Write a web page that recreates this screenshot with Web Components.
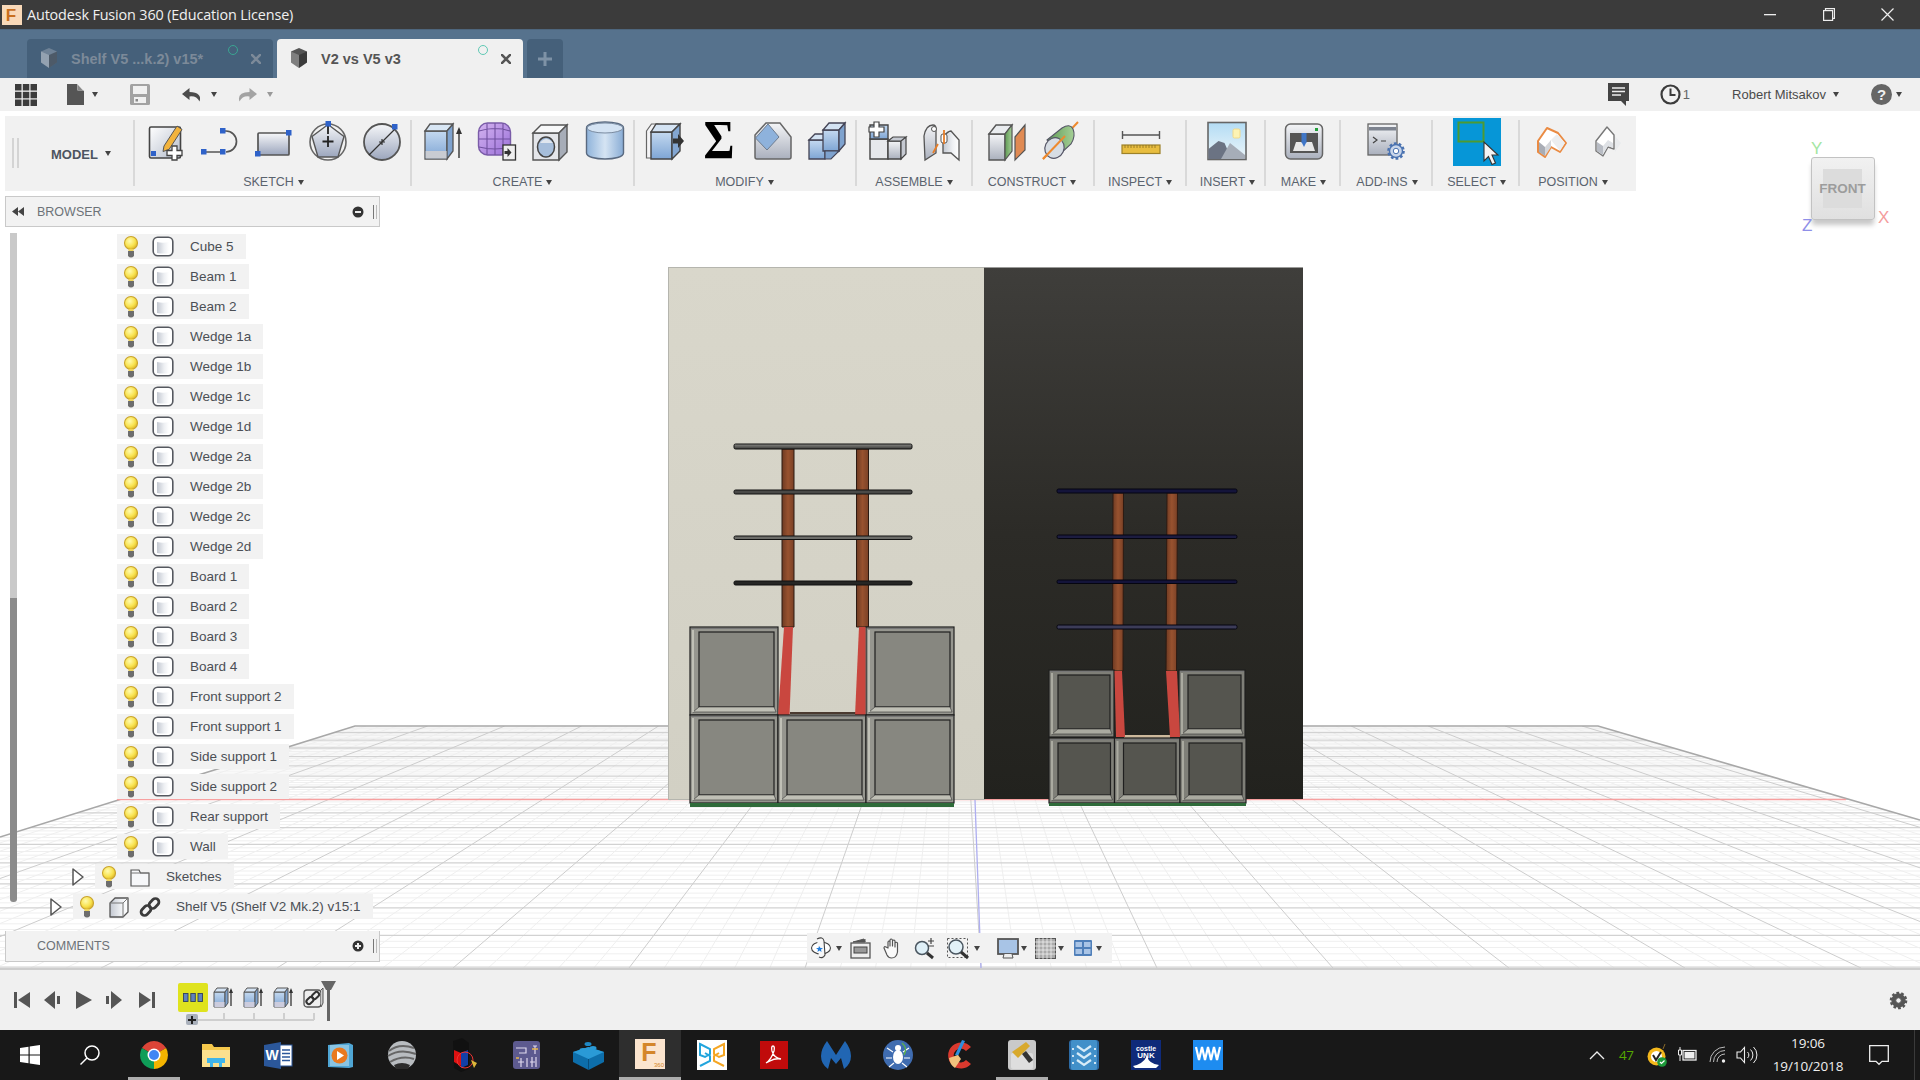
<!DOCTYPE html>
<html><head><meta charset="utf-8"><title>Fusion 360</title>
<style>
html,body{margin:0;padding:0;background:#fff}
body{width:1920px;height:1080px;overflow:hidden;display:flex;flex-direction:column;font-family:"Liberation Sans",Arial,sans-serif}
</style></head><body>
<win-titlebar></win-titlebar>
<doc-tabs>
  <doc-tab>Shelf V5 ...k.2) v15*</doc-tab>
  <doc-tab active>V2 vs V5 v3</doc-tab>
</doc-tabs>
<quick-bar></quick-bar>
<cad-viewport>
  <tool-bar>
    <model-group></model-group>
    <tool-group label="SKETCH"><ui-icon name="sk-new"></ui-icon><ui-icon name="sk-line"></ui-icon><ui-icon name="sk-rect"></ui-icon><ui-icon name="sk-poly"></ui-icon><ui-icon name="sk-circ"></ui-icon></tool-group>
    <tool-group label="CREATE" style="--lx:-2px"><ui-icon name="cr-extrude"></ui-icon><ui-icon name="cr-form"></ui-icon><ui-icon name="cr-hole"></ui-icon><ui-icon name="cr-cyl"></ui-icon></tool-group>
    <tool-group label="MODIFY" style="--lx:-3px"><ui-icon name="md-press"></ui-icon><ui-icon name="md-sigma"></ui-icon><ui-icon name="md-fillet"></ui-icon><ui-icon name="md-combine"></ui-icon></tool-group>
    <tool-group label="ASSEMBLE" style="--lx:-2px"><ui-icon name="as-new"></ui-icon><ui-icon name="as-joint"></ui-icon></tool-group>
    <tool-group label="CONSTRUCT" style="--lx:-4px"><ui-icon name="cn-plane"></ui-icon><ui-icon name="cn-axis"></ui-icon></tool-group>
    <tool-group label="INSPECT" style="--lx:-2px"><ui-icon name="in-measure"></ui-icon></tool-group>
    <tool-group label="INSERT" style="--lx:2px"><ui-icon name="ins-image"></ui-icon></tool-group>
    <tool-group label="MAKE"><ui-icon name="mk-print"></ui-icon></tool-group>
    <tool-group label="ADD-INS"><ui-icon name="ad-script"></ui-icon></tool-group>
    <tool-group label="SELECT"><ui-icon name="sel-window" style="margin:-3px 3px -5px"></ui-icon></tool-group>
    <tool-group label="POSITION" last style="--lx:-10px"><ui-icon name="pos-a"></ui-icon><ui-icon name="pos-b" style="margin:0 4px 0 10px"></ui-icon></tool-group>
  </tool-bar>
  <panel-head kind="browser">BROWSER</panel-head>
  <tree-panel>
    <tree-row icon="body">Cube 5</tree-row>
    <tree-row icon="body">Beam 1</tree-row>
    <tree-row icon="body">Beam 2</tree-row>
    <tree-row icon="body">Wedge 1a</tree-row>
    <tree-row icon="body">Wedge 1b</tree-row>
    <tree-row icon="body">Wedge 1c</tree-row>
    <tree-row icon="body">Wedge 1d</tree-row>
    <tree-row icon="body">Wedge 2a</tree-row>
    <tree-row icon="body">Wedge 2b</tree-row>
    <tree-row icon="body">Wedge 2c</tree-row>
    <tree-row icon="body">Wedge 2d</tree-row>
    <tree-row icon="body">Board 1</tree-row>
    <tree-row icon="body">Board 2</tree-row>
    <tree-row icon="body">Board 3</tree-row>
    <tree-row icon="body">Board 4</tree-row>
    <tree-row icon="body">Front support 2</tree-row>
    <tree-row icon="body">Front support 1</tree-row>
    <tree-row icon="body">Side support 1</tree-row>
    <tree-row icon="body">Side support 2</tree-row>
    <tree-row icon="body">Rear support</tree-row>
    <tree-row icon="body">Wall</tree-row>
    <tree-row icon="folder" level="folder">Sketches</tree-row>
    <tree-row icon="comp" level="comp" link>Shelf V5 (Shelf V2 Mk.2) v15:1</tree-row>
  </tree-panel>
  <panel-head kind="comments">COMMENTS</panel-head>
  <view-cube></view-cube>
  <nav-bar></nav-bar>
</cad-viewport>
<time-line></time-line>
<task-bar></task-bar>
<script>
const DEFS=`<defs>
<linearGradient id="gb" x1="0" y1="0" x2="0" y2="1"><stop offset="0" stop-color="#c4d9f0"/><stop offset="1" stop-color="#7ea5d4"/></linearGradient>
<linearGradient id="gbh" x1="0" y1="0" x2="1" y2="0"><stop offset="0" stop-color="#8fb3da"/><stop offset=".5" stop-color="#d5e4f3"/><stop offset="1" stop-color="#88acd5"/></linearGradient>
<linearGradient id="gg" x1="0" y1="0" x2="0" y2="1"><stop offset="0" stop-color="#f4f5f7"/><stop offset="1" stop-color="#aab0bd"/></linearGradient>
<linearGradient id="gh" x1="0" y1="0" x2="1" y2="0"><stop offset="0" stop-color="#c3c8d1"/><stop offset=".6" stop-color="#eef0f3"/><stop offset="1" stop-color="#fff"/></linearGradient>
<linearGradient id="gr" x1="0" y1="0" x2="0" y2="1"><stop offset="0" stop-color="#f6f7f9"/><stop offset="1" stop-color="#9ca6bd"/></linearGradient>
<linearGradient id="gs" x1="0" y1="0" x2="1" y2="1"><stop offset="0" stop-color="#fff"/><stop offset="1" stop-color="#b4bccb"/></linearGradient>
<linearGradient id="gp" x1="0" y1="0" x2="1" y2="1"><stop offset="0" stop-color="#d4b4f0"/><stop offset="1" stop-color="#9a6fd8"/></linearGradient>
<radialGradient id="gy" cx=".4" cy=".35" r=".7"><stop offset="0" stop-color="#fffbb0"/><stop offset=".6" stop-color="#f8e24e"/><stop offset="1" stop-color="#d8ad24"/></radialGradient>
<linearGradient id="gn" x1="0" y1="0" x2="1" y2="0"><stop offset="0" stop-color="#5f9a55"/><stop offset="1" stop-color="#a5cf96"/></linearGradient>
<linearGradient id="gsky" x1="0" y1="0" x2="0" y2="1"><stop offset="0" stop-color="#b3dcf4"/><stop offset="1" stop-color="#edf6fa"/></linearGradient>
</defs>`;
const sq=(x,y,s=5.5)=>`<rect x="${x}" y="${y}" width="${s}" height="${s}" fill="#2f62c9"/>`;
const gear=(x,y,r=6,c='#4a72b0')=>`<circle cx="${x}" cy="${y}" r="${r+.8}" fill="none" stroke="${c}" stroke-width="3" stroke-dasharray="2.6 2"/><circle cx="${x}" cy="${y}" r="${r}" fill="#c9d6ea" stroke="${c}" stroke-width="1.4"/><circle cx="${x}" cy="${y}" r="${r*.42}" fill="#fff" stroke="${c}"/>`;
const ICONS={
'sk-new':[40,40,`<rect x="3.5" y="6" width="31" height="31" rx="1.5" fill="url(#gs)" stroke="#444" stroke-width="1.6"/><path d="M18 25L31 5l5 3.5-13 20-6 2z" fill="#f2b33d" stroke="#555"/>${sq(5,30,5)}<path d="M26 25h5v4.5h5v5h-5v4.5h-5v-4.5h-5v-5h5z" fill="#fff" stroke="#444" stroke-width="1.3"/>`],
'sk-line':[40,40,`<path d="M5 31H25M24 10h2a10.500 10.500 0 0 1 0 21" fill="none" stroke="#555" stroke-width="1.7"/>${sq(1,28)}${sq(20,28)}${sq(20,7)}`],
'sk-rect':[40,40,`<rect x="4" y="12" width="31" height="22" rx="1" fill="url(#gr)" stroke="#555" stroke-width="1.7"/>${sq(32,9)}${sq(1,30)}`],
'sk-poly':[40,40,`<circle cx="20" cy="21" r="18" fill="none" stroke="#666" stroke-width="1.6"/><path d="M20 3.500L36 15.500 30 36H10L4 15.500z" fill="url(#gr)" stroke="#555" stroke-width="1.4"/><path d="M20 15v11M14.500 20.500h11M20 4v9" stroke="#222" stroke-width="1.8"/>${sq(17.5,0)}`],
'sk-circ':[40,40,`<circle cx="20" cy="21" r="18" fill="url(#gr)" stroke="#555" stroke-width="1.8"/><path d="M7 34L33 8M17 21h6M20 18v6" stroke="#333" stroke-width="1.2"/>${sq(30,3)}`],
'cr-extrude':[40,40,`<path d="M2 10h22v28H2z" fill="url(#gb)" stroke="#555" stroke-width="1.3"/><path d="M2 10l5-7h23l-6 7z" fill="#d8e6f4" stroke="#555" stroke-width="1.3"/><path d="M24 10l6-7v27l-6 8z" fill="#7fa3cf" stroke="#555" stroke-width="1.3"/><path d="M2.600 30h21v7.500h-21z" fill="#c9ccd2"/><path d="M36 37V8" stroke="#333" stroke-width="1.4"/><path d="M33 13l3-7 3 7z" fill="#333"/>`],
'cr-form':[40,40,`<rect x="1.500" y="2" width="32" height="32" rx="9" fill="url(#gp)" stroke="#7a5ca8" stroke-width="1.4"/><path d="M2 10q16-5 31 0M2 18h31M2 26q16 4 31 0M10 2.500v31M18 2v32M26 2.500v31" fill="none" stroke="#71519f" stroke-width="1.1"/><rect x="26" y="24" width="12.500" height="15" fill="#eee" stroke="#333" stroke-width="1.3"/><path d="M27.500 30h3v-3l4 4.500-4 4.500v-3h-3z" fill="#333"/>`],
'cr-hole':[40,40,`<path d="M2 12h26v27H2z" fill="#e4e6ea" stroke="#555" stroke-width="1.4"/><path d="M2 12l8-8h26l-8 8z" fill="#f7f8f9" stroke="#555" stroke-width="1.4"/><path d="M28 12l8-8v27l-8 8z" fill="#a7adb8" stroke="#555" stroke-width="1.4"/><ellipse cx="15" cy="26" rx="8.500" ry="10" fill="#a6bedb" stroke="#444" stroke-width="1.5"/><path d="M9 22q6-8 13 0" fill="#dfe6ee"/>`],
'cr-cyl':[40,40,`<path d="M1.500 7c0-8 37-8 37 0v25c0 8-37 8-37 0z" fill="url(#gbh)" stroke="#5a6a80" stroke-width="1.4"/><ellipse cx="20" cy="7" rx="18" ry="5" fill="#d4e3f3" stroke="#7a8ba0"/>`],
'md-press':[40,40,`<path d="M1.500 10l5-7h6l-4 7v27H1.500z" fill="#f4f4f6" stroke="#666" stroke-width="1.2"/><path d="M6 11h21v27H6z" fill="url(#gb)" stroke="#444" stroke-width="1.4"/><path d="M6 11l5-8h24l-8 8z" fill="#d4e3f3" stroke="#444" stroke-width="1.4"/><path d="M27 11l8-8v27l-8 8z" fill="#83a6d1" stroke="#444" stroke-width="1.4"/><path d="M28 17.500h5V13l6 7-6 7v-4.500h-5z" fill="#333"/>`],
'md-sigma':[40,40,`<text x="20" y="37" text-anchor="middle" font-family="Liberation Serif" font-weight="700" font-size="54" fill="#000" textLength="31" lengthAdjust="spacingAndGlyphs">Σ</text>`],
'md-fillet':[40,40,`<path d="M13 2h14l11 14v20q0 2-2 2H4q-2 0-2-2V14z" fill="url(#gg)" stroke="#666" stroke-width="1.5"/><path d="M2.500 17L15 3l11 13-12 13z" fill="#8eb2dc" stroke="#6d7c8f"/>`],
'md-combine':[40,40,`<path d="M2 19h16v19H2z" fill="url(#gb)" stroke="#445" stroke-width="1.3"/><path d="M2 19l6-6h14l-6 6z" fill="#d4e3f3" stroke="#445" stroke-width="1.3"/><path d="M16 9h16v21H16z" fill="url(#gb)" stroke="#445" stroke-width="1.3"/><path d="M16 9l6-7h16l-6 7z" fill="#d4e3f3" stroke="#445" stroke-width="1.3"/><path d="M32 9l6-7v21l-6 7z" fill="#7ea2ce" stroke="#445" stroke-width="1.3"/><path d="M18 30h14l-8 8h-6z" fill="#7ea2ce" stroke="#445" stroke-width="1.1"/>`],
'as-new':[40,40,`<path d="M2 18h18v20H2z" fill="#e6e8ec" stroke="#444" stroke-width="1.4"/><path d="M2 4h18v14H2z" fill="url(#gb)" stroke="#444" stroke-width="1.4"/><path d="M20 20h13v18H20z" fill="url(#gg)" stroke="#444" stroke-width="1.4"/><path d="M20 20l5-4h13l-5 4zM33 20l5-4v17l-5 5z" fill="#c5c9d1" stroke="#444" stroke-width="1.2"/><path d="M5 1h5v5h5v5h-5v5H5v-5H0V6h5z" fill="#fff" stroke="#444" stroke-width="1.2" transform="translate(1 0)"/>`],
'as-joint':[40,40,`<path d="M2 15q2-11 9-11 3 0 3 4v24l-11 7z" fill="url(#gg)" stroke="#555" stroke-width="1.3"/><path d="M21 16q5-6 8-6l8 9v20l-8-7h-8z" fill="url(#gh)" stroke="#555" stroke-width="1.3"/><rect x="19" y="13" width="6" height="9" rx="2" fill="#fff" stroke="#555"/><circle cx="12" cy="8" r="2.500" fill="#fff" stroke="#555"/><path d="M22 9v14M11 32l5-9" stroke="#e67e2a" stroke-width="1.8" fill="none"/>`],
'cn-plane':[40,40,`<path d="M2 13h16v26H2z" fill="url(#gg)" stroke="#555" stroke-width="1.4"/><path d="M2 13l7-9h16l-7 9z" fill="#e9ecef" stroke="#555" stroke-width="1.4"/><path d="M18 13l7-9v26l-7 9z" fill="url(#gn)" stroke="#555" stroke-width="1.2"/><path d="M28 16l10-12v25L28 39z" fill="#e08a52" stroke="#555" stroke-width="1.2"/>`],
'cn-axis':[40,40,`<path d="M2 38L37 1" stroke="#ee8a2f" stroke-width="2"/><path d="M6 19L21 7q8-5 11 1 3 7-2 15L16 36z" fill="url(#gn)" stroke="#556" stroke-width="1.100"/><ellipse cx="13.500" cy="27" rx="9.500" ry="10.500" fill="#d7dde4" stroke="#556" stroke-width="1.200" transform="rotate(25 13.500 27)"/><path d="M2 38L24 15" stroke="#ee8a2f" stroke-width="2"/>`],
'in-measure':[40,40,`<path d="M1.500 14h37M1.500 10v8M38.500 10v8" stroke="#555" stroke-width="1.4" fill="none"/><rect x="1" y="24" width="38" height="8.500" fill="#e8bd3f" stroke="#9d8128" stroke-width="1.2"/><path d="M4 24v3M7 24v3M10 24v3M13 24v3M16 24v3M19 24v3M22 24v3M25 24v3M28 24v3M31 24v3M34 24v3" stroke="#8a6f20" stroke-width=".8"/>`],
'ins-image':[40,40,`<rect x="1" y="1.500" width="38" height="37" fill="url(#gsky)" stroke="#666" stroke-width="1.6"/><rect x="26" y="8" width="7" height="9" rx="1.500" fill="#fdf3b4" stroke="#f1d98b"/><path d="M1.500 38V28l10-8 6 2 7 16z" fill="#6b7383"/><path d="M14 38l9-16 15 12v4z" fill="#a6adb8"/>`],
'mk-print':[40,40,`<rect x="1.500" y="3" width="37" height="35" rx="5" fill="url(#gg)" stroke="#666" stroke-width="1.5"/><rect x="6" y="12" width="28" height="20" fill="#555"/><path d="M9 30l3-9h16l3 9z" fill="#e8e8e8"/><rect x="17.500" y="12" width="5" height="10" fill="#3f76c7"/><path d="M18 22h4l-2 4z" fill="#3f76c7"/><rect x="31" y="7" width="3" height="3" fill="#23a03a"/>`],
'ad-script':[40,40,`<rect x="1" y="3" width="29" height="31" fill="url(#gg)" stroke="#666" stroke-width="1.3"/><rect x="2" y="6" width="27" height="3.500" fill="#7d838f"/><path d="M6 16l4 3-4 3M14 20h5" fill="none" stroke="#444" stroke-width="1.2"/>${gear(29,30,6.500)}`],
'sel-window':[48,48,`<rect width="48" height="48" fill="#0696d7"/><rect x="5.500" y="4.500" width="25" height="19" fill="none" stroke="#4d9a32" stroke-width="2"/><path d="M31 24v19l4.500-4.500 3.500 8 3.500-1.500-3.500-8h6z" fill="#f4f4f4" stroke="#333" stroke-width="1.1"/>`],
'pos-a':[40,40,`<path d="M16 7L27 12 35 22 29 31 20 26 14 36 7 31V20z" fill="#fff" stroke="#ea8b43" stroke-width="2" stroke-linejoin="round"/><path d="M8 21l6 5v9l-6-4z" fill="#a9adb5"/><path d="M14 26l6-7v7l-6 9z" fill="#d4d6da"/><path d="M20 19l9 11 5-8-8-9z" fill="#eceef0"/>`],
'pos-b':[40,40,`<path d="M26 14l7 8-6 9z" fill="#e9ebed"/><path d="M19 6L26 14V28L20 26 15 35 8 30V20z" fill="#fff" stroke="#777" stroke-width="1.400" stroke-linejoin="round"/><path d="M9 21l6 4v9l-6-4z" fill="#b8bcc4"/><path d="M15 25l5-6 5 3v5l-5-2-5 8z" fill="#dfe2e6"/>`],
bulb:[16,24,`<circle cx="8" cy="8" r="6.500" fill="url(#gy)" stroke="#c9a32c" stroke-width="1.100"/><path d="M5.500 14h5v3h-5z" fill="#efd45a"/><path d="M5 16h6v5q-3 3-6 0z" fill="#6d6d6d"/>`],
body:[22,21,`<rect x="1.200" y="1.200" width="19.600" height="18.600" rx="4.500" fill="#fff" stroke="#55585f" stroke-width="1.600"/><path d="M5 6q6 1.500 12 0v11q-6 1-12 0z" fill="url(#gh)"/>`],
folder:[20,20,`<path d="M1 3h8l1.500 3H19v13H1z" fill="#f6f7f9" stroke="#555" stroke-width="1.200"/><path d="M1 6h18" stroke="#777"/>`],
comp:[22,22,`<path d="M2 7l5-5h13v14l-5 5H2z" fill="url(#gh)" stroke="#555" stroke-width="1.300" stroke-linejoin="round"/><path d="M2 7h13l5-5M15 7v14" fill="none" stroke="#777"/>`],
link:[22,22,`<g fill="none" stroke="#3b3b3b" stroke-width="2.800"><rect x="1.500" y="11" width="11" height="7" rx="3.500" transform="rotate(-45 7 14.500)"/><rect x="9.500" y="4" width="11" height="7" rx="3.500" transform="rotate(-45 15 7.500)"/></g>`],
grid:[22,22,`<g fill="#3c3c3c"><rect width="6.500" height="6.500"/><rect x="7.800" width="6.500" height="6.500"/><rect x="15.500" width="6.500" height="6.500"/><rect y="7.800" width="6.500" height="6.500"/><rect x="7.800" y="7.800" width="6.500" height="6.500"/><rect x="15.500" y="7.800" width="6.500" height="6.500"/><rect y="15.500" width="6.500" height="6.500"/><rect x="7.800" y="15.500" width="6.500" height="6.500"/><rect x="15.500" y="15.500" width="6.500" height="6.500"/></g>`],
doc:[17,21,`<path d="M0 0h10l7 7v14H0z" fill="#555"/><path d="M10.500 0l6.500 6.500h-6.500z" fill="#f0f0f0"/><path d="M11 1l5 5.500h-5z" fill="#888"/>`],
save:[20,21,`<path d="M0 1.500Q0 0 1.500 0h17Q20 0 20 1.500v18q0 1.500-1.500 1.500h-17Q0 21 0 19.500z" fill="#a2a2a2"/><rect x="3" y="2" width="14" height="8" fill="#f0f0f0"/><rect x="4" y="13" width="12" height="6" fill="#f0f0f0"/><rect x="5.500" y="15" width="2.500" height="2.500" fill="#888"/>`],
undo:[20,14,`<path d="M7.500 0L0 6l7.500 6V8.500q7-1 10 5 3-9-10-9.500z" fill="#4c4c4c"/>`],
redo:[20,14,`<path d="M12.500 0L20 6l-7.500 6V8.500q-7-1-10 5-3-9 10-9.500z" fill="#a3a3a3"/>`],
chat:[21,23,`<path d="M0 0h21v18h-3v5l-5-5H0z" fill="#444"/><path d="M4 5h13M4 8.500h13M4 12h9" stroke="#eee" stroke-width="1.300"/>`],
clock:[21,21,`<circle cx="10.500" cy="10.500" r="9" fill="none" stroke="#3b3b3b" stroke-width="2.200"/><path d="M10.500 4.500v6.500h5" fill="none" stroke="#3b3b3b" stroke-width="2"/>`],
help:[21,21,`<circle cx="10.500" cy="10.500" r="10.500" fill="#666"/><text x="10.500" y="16" text-anchor="middle" font-family="Liberation Sans" font-weight="700" font-size="15" fill="#f0f0f0">?</text>`],
orbit:[22,22,`<ellipse cx="11" cy="11" rx="9.500" ry="6" fill="#fff" stroke="#444" stroke-width="1.100"/><path d="M7 2q6-3 7 2l1 14q-2 4-6 2" fill="#f7f7f7" stroke="#444" stroke-width="1.100"/><path d="M9 9l1.500 2L13 11l-2 1.500.5 2.500-2-1.500-2 1.500.5-2.500L6 11h2.500z" fill="#1f7bdc"/>`],
pan:[21,21,`<path d="M3 4l11-3 1 3zM15 1v3" fill="#555" stroke="#555"/><rect x="1" y="5" width="19" height="15" fill="#eee" stroke="#555" stroke-width="1.300"/><rect x="4" y="9" width="13" height="6" fill="#999" stroke="#444"/>`],
hand:[21,21,`<path d="M6 10V4q1-2 2 0v4-6q1-2 2.500 0v6-5q1.500-2 2.500 0v6-4q1.500-1.500 2.500 0v9q-1 6-6 6-3 0-4.500-3L2 10q0-2 2-1z" fill="#fafafa" stroke="#555" stroke-width="1.200" stroke-linejoin="round"/>`],
zoomp:[22,21,`<circle cx="8" cy="10" r="6.500" fill="#dff0f8" stroke="#4a5660" stroke-width="1.500"/><path d="M13 15l6 5" stroke="#333" stroke-width="3"/><path d="M14 3h6M17 0v6M14 8h6" stroke="#444" stroke-width="1.200"/>`],
zoomw:[22,21,`<rect x=".5" y=".5" width="20" height="19" fill="none" stroke="#555" stroke-dasharray="2 2"/><circle cx="9" cy="9" r="7" fill="#e2f1f8" stroke="#4a5660" stroke-width="1.500"/><path d="M14 14l7 6" stroke="#333" stroke-width="3"/>`],
display:[22,21,`<rect x="1" y="1" width="20" height="15" fill="#a8c4e6" stroke="#555" stroke-width="1.800"/><path d="M7 16l-1 4h10l-1-4" fill="#eee" stroke="#555"/>`],
vgrid:[21,21,`<rect x=".5" y=".5" width="20" height="20" fill="#aaa" stroke="#555"/><path d="M4 0v21M8 0v21M12 0v21M16 0v21M0 4h21M0 8h21M0 12h21M0 16h21" stroke="#f0f0f0" stroke-width=".8"/>`],
views:[20,18,`<rect x="1" y="1" width="18" height="16" rx="1" fill="#4f7fb9"/><g fill="#a9c4e6"><rect x="2.500" y="3" width="6.500" height="5"/><rect x="11" y="3" width="6.500" height="5"/><rect x="2.500" y="10" width="6.500" height="5"/><rect x="11" y="10" width="6.500" height="5"/></g>`],
tfirst:[16,18,`<path d="M0 1h3v16H0zM16 1v16L4 9z" fill="#555"/>`],
tprev:[16,18,`<path d="M11 0v18L0 9zM13 5h3v8h-3z" fill="#555"/>`],
tplay:[16,18,`<path d="M0 0l16 9L0 18z" fill="#555"/>`],
tnext:[16,18,`<path d="M5 0v18l11-9zM0 5h3v8H0z" fill="#555"/>`],
tlast:[16,18,`<path d="M0 1v16l12-8zM13 1h3v16h-3z" fill="#555"/>`],
tchip:[30,29,`<rect width="30" height="29" rx="2" fill="#dfe31e"/><g fill="#5f82bc" stroke="#30405c" stroke-width=".9"><rect x="5.500" y="10.500" width="4.500" height="8"/><rect x="12.800" y="10.500" width="4.500" height="8"/><rect x="20" y="10.500" width="4.500" height="8"/></g>`],
text:[20,22,`<path d="M1 6h11v15H1z" fill="url(#gb)" stroke="#555"/><path d="M1 6l3-4h11l-3 4z" fill="#d4e3f3" stroke="#555"/><path d="M12 6l3-4v15l-3 4z" fill="#7ea2ce" stroke="#555"/><path d="M1.500 16h10v5h-10z" fill="#ccd"/><path d="M18 20V4" stroke="#333" stroke-width="1.300"/><path d="M16 7l2-5 2 5z" fill="#333"/>`],
tlink:[21,21,`<rect x="1" y="3" width="17" height="17" rx="3" fill="#eee" stroke="#555" stroke-width="1.300"/><path d="M18 3l2-2v15l-2 4" fill="#ccc" stroke="#555"/><g fill="none" stroke="#333" stroke-width="2"><rect x="3" y="11" width="8" height="5" rx="2.500" transform="rotate(-45 7 13.500)"/><rect x="8.500" y="6" width="8" height="5" rx="2.500" transform="rotate(-45 12.500 8.500)"/></g>`],
tgear:[21,21,gear(10.5,10.5,6.5,'#555').replace(/#c9d6ea/g,'#555').replace(/#fff/g,'#f0f0f0')],
win:[20,20,`<path d="M0 3l8.500-1.200v7.700H0zM9.700 1.600L20 0v9.500H9.700zM0 10.500h8.500v7.700L0 17zM9.700 10.500H20V20L9.700 18.400z" fill="#fff"/>`],
search:[20,20,`<circle cx="12" cy="8" r="7" fill="none" stroke="#fff" stroke-width="1.500"/><path d="M7 13l-6.500 6.500" stroke="#fff" stroke-width="1.500"/>`],
chrome:[28,28,`<path d="M14 14L1.900 7A14 14 0 0 1 26.100 7z" fill="#db4437"/><path d="M14 14L26.100 7A14 14 0 0 1 14 28z" fill="#f4b400"/><path d="M14 14L14 28A14 14 0 0 1 1.900 7z" fill="#0f9d58"/><circle cx="14" cy="14" r="6.500" fill="#fff"/><circle cx="14" cy="14" r="5" fill="#4285f4"/>`],
explorer:[28,24,`<path d="M0 1h10l2 3h16v20H0z" fill="#f5c84c"/><path d="M0 7h28v17H0z" fill="#fbe08e"/><rect x="5" y="15" width="18" height="5" fill="#3fb4ea"/><rect x="8" y="20" width="3" height="4" fill="#3fb4ea"/><rect x="17" y="20" width="3" height="4" fill="#3fb4ea"/>`],
word:[28,27,`<path d="M0 3l17-3v27L0 24z" fill="#2b579a"/><rect x="16" y="3" width="12" height="21" fill="#fff" stroke="#2b579a"/><path d="M18 8h8M18 11.500h8M18 15h8M18 18.500h8" stroke="#2b579a" stroke-width="1.500"/><text x="8" y="18" text-anchor="middle" font-family="Liberation Sans" font-weight="700" font-size="14" fill="#fff">W</text>`],
media:[25,25,`<path d="M0 2l21-2 4 2v22l-4 1-21-1z" fill="#4fa6d5"/><rect x="2" y="2" width="19" height="21" fill="#8ac4e2"/><circle cx="11.500" cy="12.500" r="8" fill="#e9791f"/><path d="M9 8l7 4.500-7 4.500z" fill="#fff"/>`],
earth:[28,28,`<circle cx="14" cy="14" r="14" fill="#b8bcc0"/><path d="M1 10q10-8 25-3M0 15q12-8 28-2M2 21q12-7 24-3" fill="none" stroke="#666" stroke-width="2"/><path d="M6 24q8-4 16 0l-2 4H8z" fill="#2c2c2c"/>`],
cad:[30,34,`<path d="M4 3l9-3 7 5v26l-8 3-7-4z" fill="#111"/><path d="M5 12l7 3v13l-7-4z" fill="#d11"/><path d="M12 15l7-3v15l-7 3z" fill="#123fa8"/><circle cx="16" cy="22" r="8" fill="none" stroke="#e33"/><path d="M22 22l6 3-3 5z" fill="#dcb73a"/>`],
circuit:[27,28,`<rect width="27" height="28" rx="3" fill="#5d5a8f"/><path d="M3 7h10v5H6M22 5v8M24 5h-4M8 17v9M5 21h6M14 17v9M19 16v10M23 16v10M17 21h5" stroke="#dfd9ee" stroke-width="1.200" fill="none"/><path d="M19 8h6M3 17h3" stroke="#e8b64c" stroke-width="1.500"/>`],
brick:[31,29,`<path d="M15.500 6L31 11v10L15.500 29 0 21V11z" fill="#0d6eaa"/><path d="M0 11l15.500-5L31 11l-15.500 7z" fill="#2a9ad6"/><ellipse cx="10" cy="9" rx="3.500" ry="2" fill="#2a9ad6"/><ellipse cx="20" cy="7" rx="3.500" ry="2" fill="#2a9ad6"/><ellipse cx="15" cy="3" rx="3.500" ry="2" fill="#1e88c4"/><path d="M15.500 18v11" stroke="#094f7c"/>`],
fus:[30,30,`<rect width="30" height="30" fill="#fbe5cf"/><text x="14" y="22" text-anchor="middle" font-family="Liberation Sans" font-weight="700" font-size="25" fill="#d4862a">F</text><text x="24" y="28" text-anchor="middle" font-family="Liberation Sans" font-size="6" fill="#d4862a">360</text>`],
xm:[30,30,`<rect width="30" height="30" fill="#fff"/><path d="M3 4l10 5v5l-5 3-5-2zM3 26l10-5v-5l-5-3" fill="none" stroke="#22a5dd" stroke-width="2"/><path d="M27 4l-10 5v5l5 3 5-2zM27 26l-10-5v-5l5-3" fill="none" stroke="#f5a623" stroke-width="2"/>`],
pdf:[28,28,`<rect width="28" height="28" fill="#c00b0b"/><path d="M6 22q5-3 8-12 1-5-1-5t-1 5q2 7 9 8-6-1-11 2z" fill="none" stroke="#fff" stroke-width="1.300"/>`],
mb:[30,28,`<path d="M15 14L6 0Q0 8 0 15q0 8 7 13l3-11 5 6 5-6 3 11q7-5 7-13 0-7-6-15z" fill="#2166b3"/>`],
spy:[30,30,`<circle cx="15" cy="15" r="15" fill="#3f6cb0"/><ellipse cx="15" cy="17" rx="5" ry="7" fill="#fff"/><circle cx="15" cy="8" r="3" fill="#fff"/><path d="M10 12L4 8M20 12l6-4M9 18H3M21 18h6M11 23l-5 4M19 23l5 4" stroke="#fff" stroke-width="1.200"/><path d="M19 3q6 5 2 12" stroke="#5bb04c" fill="none" stroke-width="1.400"/>`],
cc:[30,30,`<path d="M26 7A13 13 0 1 0 26 24l-5-4A7 7 0 1 1 21 11z" fill="#d9392e"/><path d="M17 0l3 1-7 15-3-1z" fill="#2f8edb"/><path d="M4 18l9-3 3 4-6 9q-5-3-6-10z" fill="#f2c27d"/>`],
disk:[28,30,`<rect width="28" height="30" rx="3" fill="#c9c9c9"/><rect x="3" y="13" width="22" height="16" rx="2" fill="#dedede"/><path d="M4 12L18 2l4 4-12 12z" fill="#d8a92c"/><path d="M14 14l4-3 7 9-4 3z" fill="#333"/>`],
pak:[30,30,`<rect width="30" height="30" rx="3" fill="#2c6ba5"/><rect x="2" y="0" width="26" height="30" rx="2" fill="#4290c9"/><path d="M8 6l7 5 7-5M8 13l7 5 7-5M8 20l7 5 7-5" fill="none" stroke="#d8ecf8" stroke-width="2.200"/><path d="M4 8v2M4 15v2M4 22v2M26 8v2M26 15v2M26 22v2" stroke="#cfe4f2" stroke-width="2"/>`],
cu:[30,30,`<rect width="30" height="30" fill="#0f2a7a"/><path d="M2 26q10-2 14-10 2 8 12 9l-3 3H4z" fill="#fff"/><text x="15" y="11" text-anchor="middle" font-family="Liberation Sans" font-weight="700" font-size="8" fill="#fff" textLength="20" lengthAdjust="spacingAndGlyphs">costle</text><text x="15" y="18" text-anchor="middle" font-family="Liberation Sans" font-weight="700" font-size="8" fill="#fff">UNK</text>`],
wave:[30,30,`<rect width="30" height="30" fill="#1e8cf0"/><path d="M3 7l3 13 3-13 3 13 3-13 3 13 3-13 3 13 3-13" fill="none" stroke="#fff" stroke-width="2.200"/>`],
fapp:[20,20,`<rect width="20" height="20" fill="#f9d9b8"/><text x="9" y="16" text-anchor="middle" font-family="Liberation Sans" font-weight="700" font-size="17" fill="#c96f1e">F</text>`],
cube3d:[20,20,`<path d="M2 3.500L10 0l8 3.500v11L10 20l-8-5.500z" fill="currentColor"/><path d="M10 7v13L2 14.500v-11z" fill="#fff" opacity=".25"/><path d="M10 7v13l8-5.500v-11z" fill="#000" opacity=".3"/>`],
caret:[16,9,`<path d="M1 8l7-7 7 7" fill="none" stroke="#eee" stroke-width="1.300"/>`],
norton:[20,23,`<circle cx="9.500" cy="12.500" r="9" fill="#f4b81c"/><circle cx="9.500" cy="12.500" r="5.500" fill="#fff"/><path d="M6 11l3 5 5-8" fill="none" stroke="#222" stroke-width="2"/><circle cx="15" cy="18" r="4.800" fill="#1d9a3a"/><path d="M13 18l1.500 1.500 3-3" fill="none" stroke="#fff" stroke-width="1.200"/><path d="M16 5l2-5" stroke="#8a6a2a"/>`],
batt:[20,16,`<rect x="6" y="3.500" width="13" height="9.500" fill="none" stroke="#eee" stroke-width="1.300"/><rect x="7.500" y="5" width="10" height="6.500" fill="#eee"/><path d="M3 0v3M1.500 3h3v5h-3zM3 8v6" stroke="#eee" fill="none"/>`],
wifi:[16,16,`<path d="M0 15a15 15 0 0 1 15-15M3.500 15a11.500 11.500 0 0 1 11.500-11.500M7 15a8 8 0 0 1 8-8" fill="none" stroke="#bbb" stroke-width="1"/><circle cx="13.500" cy="14" r="1.700" fill="#eee"/>`],
vol:[20,18,`<path d="M0 6h3.500l4-4.500v15l-4-4.500H0z" fill="none" stroke="#eee" stroke-width="1.100"/><path d="M10.500 6a4 4 0 0 1 0 6M13.500 3.500a7.500 7.500 0 0 1 0 11M16.500 1a11 11 0 0 1 0 16" fill="none" stroke="#eee" stroke-width="1"/>`],
notif:[20,20,`<path d="M.7.700h18.600v15.600h-6.300l-3 3-3-3H.7z" fill="none" stroke="#eee" stroke-width="1.300"/>`]
};
class UiIcon extends HTMLElement{
  constructor(){super();this.attachShadow({mode:'open'})}
  connectedCallback(){
    const e=ICONS[this.getAttribute('name')];if(!e)return;
    const [w,h,b]=e;
    this.shadowRoot.innerHTML=`<style>:host{display:inline-block;width:${w}px;height:${h}px;flex:none;line-height:0}svg{display:block;overflow:visible}</style><svg width="${w}" height="${h}" viewBox="0 0 ${w} ${h}" xmlns="http://www.w3.org/2000/svg">${DEFS}${b}</svg>`;
  }
}
customElements.define('ui-icon',UiIcon);
function def(tag,html){
  class C extends HTMLElement{constructor(){super();this.attachShadow({mode:'open'}).innerHTML=html;}}
  customElements.define(tag,C);
}
const CARET=(c='#444')=>`<span style="display:inline-block;width:0;height:0;border-left:3.5px solid transparent;border-right:3.5px solid transparent;border-top:5px solid ${c}"></span>`;
def('win-titlebar',`<style>
:host{display:flex;flex:none;height:29px;background:#3b3b3b;align-items:center;color:#f0f0f0;font:14.400px "Open Sans",sans-serif}
.t{margin-left:5px;letter-spacing:-.15px}
ui-icon{margin-left:2px}
.c{margin-left:auto;display:flex;align-items:center}
.b{width:59px;height:29px;display:flex;align-items:center;justify-content:center}
</style><ui-icon name="fapp"></ui-icon><span class="t">Autodesk Fusion 360 (Education License)</span>
<div class="c"><div class="b"><svg width="12" height="2"><rect width="12" height="1.300" fill="#eee"/></svg></div>
<div class="b"><svg width="12" height="13" fill="none" stroke="#eee" stroke-width="1.200"><rect x=".6" y="2.600" width="9" height="9.800"/><path d="M2.500 2.500V.6h9v9.800H9.700"/></svg></div>
<div class="b" style="margin-right:3px"><svg width="13" height="13" stroke="#eee" stroke-width="1.200"><path d="M.5.500l12 12M12.500.500l-12 12"/></svg></div></div>`);
def('doc-tabs',`<style>
:host{display:flex;flex:none;height:49px;box-sizing:border-box;background:#56728d;border-top:1px solid #4e667d;padding:9px 0 0 27px;gap:4px}
.p{width:36px;height:39px;background:#45607a;border-radius:4px 4px 0 0;display:flex;align-items:center;justify-content:center}
</style><slot></slot><div class="p"><svg width="14" height="14" fill="#7e92a6"><path d="M5.500 0h3v5.500H14v3H8.500V14h-3V8.500H0v-3h5.500z"/></svg></div>`);
def('doc-tab',`<style>
:host{display:flex;width:246px;height:39px;box-sizing:border-box;padding:0 12px;align-items:center;background:#45607a;color:#7c8a99;border-radius:4px 4px 0 0;font:700 14.500px "Liberation Sans",sans-serif}
:host([active]){background:#f0f0f0;color:#555}
ui-icon{color:#6f8296;margin-bottom:2px}
:host([active]) ui-icon{color:#555}
.t{flex:1;margin-left:12px;white-space:nowrap}
.o{width:10px;height:10px;box-sizing:border-box;border:1.500px solid #3aa592;border-radius:50%;margin-bottom:18px}
:host([active]) .o{border-color:#5fc9b4}
.x{margin-left:13px}
</style><ui-icon name="cube3d"></ui-icon><span class="t"><slot></slot></span><span class="o"></span><svg class="x" width="10" height="10" stroke-width="2.600"><path d="M0 0l10 10M10 0L0 10" stroke="currentColor"/></svg>`);
def('quick-bar',`<style>
:host{display:flex;flex:none;height:33px;background:#f0f0f0;align-items:center;box-sizing:border-box;font:13px "Liberation Sans",sans-serif;color:#4a4a4a}
span.n{white-space:nowrap}
.r{margin-left:auto;display:flex;align-items:center;padding-right:18px}
</style>
<ui-icon name="grid" style="margin-left:15px"></ui-icon>
<ui-icon name="doc" style="margin-left:30px"></ui-icon><span style="margin-left:8px;display:flex">${CARET()}</span>
<ui-icon name="save" style="margin-left:32px"></ui-icon>
<ui-icon name="undo" style="margin-left:32px"></ui-icon><span style="margin-left:9px;display:flex">${CARET()}</span>
<ui-icon name="redo" style="margin-left:20px"></ui-icon><span style="margin-left:10px;display:flex">${CARET('#999')}</span>
<div class="r"><ui-icon name="chat"></ui-icon><ui-icon name="clock" style="margin-left:31px"></ui-icon><span style="margin-left:2px;color:#666">1</span><span class="n" style="margin-left:42px">Robert Mitsakov</span><span style="margin-left:7px;display:flex">${CARET()}</span><ui-icon name="help" style="margin-left:32px"></ui-icon><span style="margin-left:4px;display:flex">${CARET()}</span></div>`);
def('tool-bar',`<style>
:host{display:grid;flex:none;width:1631px;height:75px;box-sizing:border-box;padding-top:4px;background:#f1f1f1;grid-template-columns:130px 277px 223px 222px 116px 122px 92px 79px 75px 92px 87px 116px}
</style><slot></slot>`);
def('model-group',`<style>
:host{display:flex;height:71px;align-items:flex-start;background:linear-gradient(#d9d9d9,#d9d9d9) right top/2px 66px no-repeat;font:700 13px "Liberation Sans",sans-serif;color:#4d5560}
.g{width:7px;height:30px;margin:18px 0 0 7px;box-sizing:border-box;border-left:2px solid #d4d4d4;border-right:2px solid #d4d4d4}
.m{margin:27px 0 0 32px}
.a{margin:31px 0 0 7px;display:flex}
</style><div class="g"></div><span class="m">MODEL</span><span class="a">${CARET()}</span>`);
class ToolGroup extends HTMLElement{
  constructor(){super();this.attachShadow({mode:'open'}).innerHTML=`<style>
:host{display:flex;flex-direction:column;align-items:center;height:71px;background:linear-gradient(#d9d9d9,#d9d9d9) right top/2px 66px no-repeat}
:host([last]){background:none}
.i{display:flex;height:40px;margin-top:1px}
::slotted(ui-icon){margin:0 7px}
.l{margin-top:14px;margin-left:var(--lx,0);height:14px;font:12.500px/14px "Liberation Sans",sans-serif;color:#5a636e;display:flex;align-items:center;gap:4px;white-space:nowrap}
</style><div class="i"><slot></slot></div><div class="l"><span id="t"></span>${CARET()}</div>`;}
  connectedCallback(){this.shadowRoot.getElementById('t').textContent=this.getAttribute('label')}
}
customElements.define('tool-group',ToolGroup);
class PanelHead extends HTMLElement{
  constructor(){super();this.attachShadow({mode:'open'})}
  connectedCallback(){
    const c=this.getAttribute('kind')==='comments';
    this.shadowRoot.innerHTML=`<style>
:host{display:flex;flex:none;align-items:center;width:375px;height:31px;box-sizing:border-box;background:#f2f2f2;border:1px solid #c9c9c9;font:12.500px "Liberation Sans",sans-serif;color:#6d7278;margin-top:5px}
:host([kind=comments]){border-top:none;margin-top:auto;margin-bottom:6px}
.d{width:12px;margin-left:6px;display:flex}
.t{margin-left:13px;flex:1}
.h{width:2px;height:14px;border-left:1px solid #777;border-right:1px solid #bbb;margin:0 2px 0 9px}
svg{display:block}
</style><span class="d">${c?'':'<svg width="12" height="9"><path d="M6 0v9L0 4.500zM12 0v9L6 4.500z" fill="#444"/></svg>'}</span><span class="t"><slot></slot></span><svg width="12" height="12"><circle cx="6" cy="6" r="5.500" fill="#333"/><rect x="3" y="5" width="6" height="2" fill="#eee"/>${c?'<rect x="5" y="3" width="2" height="6" fill="#eee"/>':''}</svg><span class="h"></span>`;
  }
}
customElements.define('panel-head',PanelHead);
def('tree-panel',`<style>
:host{display:flex;flex:none;margin-top:7px;align-items:flex-start}
.s{width:7px;height:669px;margin:-1px 0 0 5px;border-radius:0 0 3px 3px;background:linear-gradient(#c9c9c9 365px,#8b8b8b 365px);flex:none}
.l{display:flex;flex-direction:column;gap:5px}
</style><div class="s"></div><div class="l"><slot></slot></div>`);
class TreeRow extends HTMLElement{
  constructor(){super();this.attachShadow({mode:'open'})}
  connectedCallback(){
    const lv=this.getAttribute('level'),ic=this.getAttribute('icon'),link=this.hasAttribute('link');
    this.shadowRoot.innerHTML=`<style>
:host{display:flex;height:25px;align-items:center;margin-left:100px;font:13.500px "Liberation Sans",sans-serif;color:#4b4f55}
:host([level=folder]){margin-left:55px}
:host([level=comp]){margin-left:33px}
.e{margin-right:11px;display:flex}
.p{display:flex;align-items:center;height:25px;background:#f2f2f2;padding:0 12px 0 6px;white-space:nowrap}
.b{margin-left:13px}
.t{margin-left:16px}
.k{margin-left:9px}
:host([level=comp]) .t{margin-left:15px}
</style>${lv?`<span class="e"><svg width="12" height="18"><path d="M1 1l10 8-10 8z" fill="#fff" stroke="#555" stroke-width="1.500" stroke-linejoin="round"/></svg></span>`:''}
<div class="p"><ui-icon name="bulb"></ui-icon><ui-icon class="b" name="${ic}"></ui-icon>${link?'<ui-icon class="k" name="link"></ui-icon>':''}<span class="t"><slot></slot></span></div>`;
  }
}
customElements.define('tree-row',TreeRow);
def('view-cube',`<style>
:host{position:absolute;left:1800px;top:28px;width:95px;height:95px;font:700 13.500px "Liberation Sans",sans-serif}
.c{position:absolute;left:11px;top:18px;width:64px;height:63px;box-sizing:border-box;border:1.500px solid #c2c2c2;border-radius:3px;background:linear-gradient(#f1f1f1,#e0e0e0);box-shadow:0 6px 5px -1px #c8c8c8}
.f{position:absolute;left:11px;top:11px;width:39px;height:39px;background:#dcdcdc;display:flex;align-items:center;justify-content:center;color:#9c9c9c}
.a{position:absolute;font-weight:400;font-size:17px;line-height:17px}
</style><span class="a" style="left:11px;top:1px;color:#a3e6a3">Y</span><div class="c"><div class="f">FRONT</div></div><span class="a" style="left:78px;top:70px;color:#f49c9c">X</span><span class="a" style="left:2px;top:78px;color:#8f8fe8">Z</span>`);
def('nav-bar',`<style>
:host{position:absolute;left:807px;bottom:5px;width:305px;height:30px;background:#f2f2f2;display:flex;align-items:center;box-sizing:border-box;padding-left:3px}
ui-icon{display:block}
span{display:flex}
</style><ui-icon name="orbit"></ui-icon><span style="margin-left:4px">${CARET()}</span>
<ui-icon name="pan" style="margin-left:8px"></ui-icon><ui-icon name="hand" style="margin-left:11px"></ui-icon><ui-icon name="zoomp" style="margin-left:11px"></ui-icon><ui-icon name="zoomw" style="margin-left:11px"></ui-icon><span style="margin-left:5px">${CARET()}</span>
<ui-icon name="display" style="margin-left:17px"></ui-icon><span style="margin-left:2px">${CARET()}</span>
<ui-icon name="vgrid" style="margin-left:8px"></ui-icon><span style="margin-left:2px">${CARET()}</span>
<ui-icon name="views" style="margin-left:9px"></ui-icon><span style="margin-left:3px">${CARET()}</span>`);
class CadViewport extends HTMLElement{
  constructor(){super();this.attachShadow({mode:'open'});
    this.shadowRoot.innerHTML=`<style>
:host{display:flex;flex-direction:column;flex:none;height:857px;box-sizing:border-box;padding:5px 0 0 5px;position:relative;isolation:isolate;background:#fff;overflow:hidden}
svg{position:absolute;left:0;top:0;z-index:-1}
</style><svg width="1920" height="857" viewBox="0 111 1920 857" xmlns="http://www.w3.org/2000/svg">${scene()}</svg><slot></slot>`;}
}
function scene(){
  const VP=[955,538];let minor='',major='';
  for(let i=-60;i<=60;i++){
    const xb=981+176*i/5,xt=VP[0]+(xb-VP[0])*188/430;
    const l=`<path d="M${xt.toFixed(1)} 726L${xb.toFixed(1)} 968"/>`;
    if(i%5===0)major+=l;else minor+=l;
  }
  let hmin='',hmaj='';
  for(let n=0;n<=16;n++){
    for(let m=0;m<5;m++){
      const y=(538+1/(.00233+.000187*(n+m/5))).toFixed(1);
      if(y<726)continue;
      const l=`<path d="M0 ${y}H1920"/>`;
      if(m===0)hmaj+=l;else hmin+=l;
    }
  }
  const wood=(x1,y1,x2,y2,w)=>`<path d="M${x1} ${y1}h${w}L${x2+w} ${y2}h-${w}z" fill="url(#wd)" stroke="#2c1a12" stroke-width="1"/>`;
  const shelf=(x,y,w,h,c,e='#111')=>`<rect x="${x}" y="${y}" width="${w}" height="${h}" rx="1.500" fill="${c}" stroke="${e}" stroke-width="1"/>`;
  const wedge=(a,b,c,d,y1,y2)=>`<path d="M${a} ${y1}H${b}L${d} ${y2}H${c}z" fill="#c9473f"/>`;
  const box=(x,y,w,h,f,p,lip)=>`<rect x="${x}" y="${y}" width="${w}" height="${h}" fill="${f}" stroke="#1e1e1e" stroke-width="1.200"/>
  <rect x="${x+9}" y="${y+5}" width="${w-13}" height="${h-13}" fill="${p}" stroke="#1f1f1f" stroke-width="1.200"/>
  <path d="M${x+3} ${y+h-3}L${x+9} ${y+h-8}H${x+w-4}L${x+w-2} ${y+h-3}z" fill="${lip}" stroke="#333" stroke-width=".6"/>
  <path d="M${x+3} ${y+3}V${y+h-3}" stroke="${lip}" stroke-width="2"/><path d="M${x+1} ${y+1.500}H${x+w-1}" stroke="#777" stroke-width="1"/>`;
  const LF='#96968f',LP='#878780',LL='#c0c0b6',DF='#7f7f78',DP='#55554f',DL='#aaaaa0';
  return `<defs>
  <clipPath id="floor"><path d="M355 726H1598L1920 820V968H0V837z"/></clipPath>
  <linearGradient id="wl" x1="0" y1="0" x2="0" y2="1"><stop offset="0" stop-color="#d9d7cb"/><stop offset="1" stop-color="#d2d0c4"/></linearGradient>
  <linearGradient id="wr" x1="0" y1="0" x2="0" y2="1"><stop offset="0" stop-color="#3f3e3b"/><stop offset=".5" stop-color="#2c2b27"/><stop offset="1" stop-color="#22221e"/></linearGradient>
  <linearGradient id="wd" x1="0" y1="0" x2="1" y2="0"><stop offset="0" stop-color="#6d3a22"/><stop offset=".5" stop-color="#98522f"/><stop offset="1" stop-color="#7a4126"/></linearGradient>
  <linearGradient id="sh" x1="0" y1="0" x2="0" y2="1"><stop offset="0" stop-color="#8a8a86"/><stop offset="1" stop-color="#3a3a38"/></linearGradient>
  </defs>
  <g clip-path="url(#floor)"><g stroke="#efefef" stroke-width="1" fill="none">${hmin}${minor}</g><g stroke="#d2d2d2" stroke-width="1.300" fill="none">${hmaj}</g><g stroke="#cdcdcd" stroke-width="1" fill="none">${major}</g></g>
  <path d="M0 837L355 726H1598L1920 820" fill="none" stroke="#a8a8a8" stroke-width="1.600"/>
  <path d="M117 799.500H1846" stroke="#f7a0a0" stroke-width="1.300"/>
  <path d="M975 800L981 968" stroke="#aeaef0" stroke-width="1.300"/>
  <rect x="668.500" y="267.500" width="316" height="532" fill="url(#wl)" stroke="#b5b5ae" stroke-width="1"/>
  <rect x="984" y="267" width="319" height="532" fill="url(#wr)"/><path d="M984 267.500H1303" stroke="#9a9a98"/>
  ${wood(782,449,782,627,12)}${wood(856.5,449,856.5,627,12)}
  ${shelf(734,444,178,5,'url(#sh)')}${shelf(734,490,178,4,'#4a4a48')}${shelf(734,536,178,3.500,'#6c6c68')}${shelf(734,581,178,4,'#262624')}
  <rect x="790" y="716" width="66" height="2" fill="#c9b89a"/><rect x="790" y="712" width="66" height="2" fill="#4a3a30"/>
  ${box(690,627,88,88,LF,LP,LL)}${box(866,627,88,88,LF,LP,LL)}
  ${wedge(784,793,778,789.5,627,716)}${wedge(859,865.5,855,865.5,627,716)}
  ${box(690,715,88,88,LF,LP,LL)}${box(778,715,88,88,LF,LP,LL)}${box(866,715,88,88,LF,LP,LL)}
  <rect x="690" y="803" width="264" height="4" fill="#2f6b3a"/>
  ${wood(1113,493,1112.500,671,10.500)}${wood(1167,493,1166,671,10.500)}
  ${shelf(1057,489,180,4,'#14143a','#050510')}${shelf(1057,535,180,3.500,'#1c1c40','#050510')}${shelf(1057,580,180,3.500,'#14143a','#050510')}${shelf(1057,625,180,4,'#3c3c58','#050510')}
  <rect x="1124" y="735" width="46" height="3" fill="#cdb99c"/>
  ${box(1049,670,65,67,DF,DP,DL)}${box(1179,670,66,67,DF,DP,DL)}
  ${wedge(1114.5,1122,1116,1125,671,737)}${wedge(1166,1177,1170,1180,671,737)}
  ${box(1049,738,65.500,65,DF,DP,DL)}${box(1114.500,738,65.500,65,DF,DP,DL)}${box(1180,738,66,65,DF,DP,DL)}
  <rect x="1049" y="803" width="197" height="3" fill="#2f6b3a"/>`;
}
customElements.define('cad-viewport',CadViewport);
def('time-line',`<style>
:host{display:flex;flex:none;height:62px;box-sizing:border-box;background:#f0f0f0;border-top:2px solid #cdcdcd;align-items:center;padding-left:14px}
.tr{position:relative;display:flex;align-items:center;margin-left:23px;height:60px;width:160px;padding-bottom:6px;box-sizing:border-box}
.rail{position:absolute;left:13px;top:49px;width:123px;height:2px;background:#cfcfcf}
.tick{position:absolute;top:43px;width:2px;height:7px;background:#cfcfcf}
.add{position:absolute;left:8px;top:44px;width:12px;height:11px;background:#a9b0bb;border-radius:2px;display:flex;align-items:center;justify-content:center}
.mk{position:absolute;left:143px;top:11px}
</style>
<ui-icon name="tfirst"></ui-icon><ui-icon name="tprev" style="margin-left:14px"></ui-icon><ui-icon name="tplay" style="margin-left:16px"></ui-icon><ui-icon name="tnext" style="margin-left:14px"></ui-icon><ui-icon name="tlast" style="margin-left:17px"></ui-icon>
<div class="tr"><ui-icon name="tchip"></ui-icon><ui-icon name="text" style="margin-left:5px"></ui-icon><ui-icon name="text" style="margin-left:10px"></ui-icon><ui-icon name="text" style="margin-left:10px"></ui-icon><ui-icon name="tlink" style="margin-left:10px"></ui-icon>
<div class="rail"></div><div class="tick" style="left:45px"></div><div class="tick" style="left:75px"></div><div class="tick" style="left:105px"></div><div class="tick" style="left:135px"></div>
<div class="add"><svg width="8" height="8"><path d="M3 0h2v3h3v2H5v3H3V5H0V3h3z" fill="#222"/></svg></div>
<svg class="mk" width="15" height="40"><path d="M0 0h15l-5 9H5z" fill="#666"/><rect x="6" y="6" width="3" height="34" fill="#666"/></svg></div>
<ui-icon name="tgear" style="margin-left:auto;margin-right:11px"></ui-icon>`);
def('tb-app',`<style>
:host{display:flex;width:62px;height:50px;flex:none;align-items:center;justify-content:center;position:relative;box-sizing:border-box}
:host([active]){background:#2e2e2e;border-bottom:3px solid #adadad}
:host([open])::after{content:"";position:absolute;left:5px;right:5px;bottom:0;height:3px;background:#adadad}
</style><slot></slot>`);
def('task-bar',`<style>
:host{display:flex;flex:none;height:50px;background:#181818;align-items:center;color:#eee;font:13.500px "Open Sans",sans-serif}
.l{display:flex;align-items:center;height:50px}
.s{width:60px;display:flex;justify-content:center}
.tray{margin-left:auto;display:flex;align-items:center;padding-right:31px;height:50px;position:relative}
.g{color:#55a900;width:15px;margin-left:14px;letter-spacing:-.5px}
.clk{width:80px;text-align:center;line-height:23px;margin-left:11px;white-space:nowrap;letter-spacing:-.1px}
.edge{width:1px;height:50px;background:#3a3a3a;position:absolute;right:5px;top:0}
</style><div class="l"><span class="s"><ui-icon name="win"></ui-icon></span><span class="s"><ui-icon name="search"></ui-icon></span><span style="width:3px"></span>
<tb-app open><ui-icon name="chrome"></ui-icon></tb-app><tb-app><ui-icon name="explorer"></ui-icon></tb-app><tb-app><ui-icon name="word"></ui-icon></tb-app><tb-app><ui-icon name="media"></ui-icon></tb-app><tb-app><ui-icon name="earth"></ui-icon></tb-app><tb-app><ui-icon name="cad"></ui-icon></tb-app><tb-app><ui-icon name="circuit"></ui-icon></tb-app><tb-app><ui-icon name="brick"></ui-icon></tb-app><tb-app active><ui-icon name="fus"></ui-icon></tb-app><tb-app><ui-icon name="xm"></ui-icon></tb-app><tb-app><ui-icon name="pdf"></ui-icon></tb-app><tb-app><ui-icon name="mb"></ui-icon></tb-app><tb-app><ui-icon name="spy"></ui-icon></tb-app><tb-app><ui-icon name="cc"></ui-icon></tb-app><tb-app open><ui-icon name="disk"></ui-icon></tb-app><tb-app><ui-icon name="pak"></ui-icon></tb-app><tb-app><ui-icon name="cu"></ui-icon></tb-app><tb-app><ui-icon name="wave"></ui-icon></tb-app></div>
<div class="tray"><ui-icon name="caret"></ui-icon><span class="g">47</span><ui-icon name="norton" style="margin-left:13px"></ui-icon><ui-icon name="batt" style="margin-left:10px"></ui-icon><ui-icon name="wifi" style="margin-left:13px"></ui-icon><ui-icon name="vol" style="margin-left:11px"></ui-icon><div class="clk">19:06<br>19/10/2018</div><ui-icon name="notif" style="margin-left:21px"></ui-icon><div class="edge"></div></div>`);
</script>
</body></html>
